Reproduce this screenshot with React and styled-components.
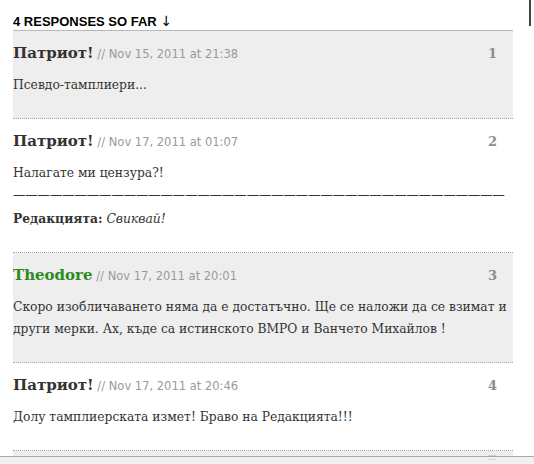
import styled, { createGlobalStyle } from "styled-components";

const comments = [
  {
    id: 1,
    author: "Патриот!",
    date: "Nov 15, 2011 at 21:38",
    alt: true,
    body: [<p key="a">Псевдо-тамплиери...</p>],
  },
  {
    id: 2,
    author: "Патриот!",
    date: "Nov 17, 2011 at 01:07",
    body: [
      <p key="a">
        Налагате ми цензура?!
        <br />
        {"—".repeat(40)}
      </p>,
      <p key="b">
        <strong>Редакцията:</strong> <em>Свиквай!</em>
      </p>,
    ],
  },
  {
    id: 3,
    author: "Theodore",
    date: "Nov 17, 2011 at 20:01",
    alt: true,
    green: true,
    body: [
      <p key="a">
        Скоро изобличаването няма да е достатъчно. Ще се наложи да се взимат и
        други мерки. Ах, къде са истинското ВМРО и Ванчето Михайлов !
      </p>,
    ],
  },
  {
    id: 4,
    author: "Патриот!",
    date: "Nov 17, 2011 at 20:46",
    body: [<p key="a">Долу тамплиерската измет! Браво на Редакцията!!!</p>],
  },
];

export default function App() {
  return (
    <>
      <GlobalStyle />
      <Page>
        <Main>
          <Heading>
            4 RESPONSES SO FAR <Arrow>↓</Arrow>
          </Heading>
          <CommentList>
            {comments.map((c) => (
              <Comment key={c.id} $alt={c.alt}>
                <CommentHead>
                  <div>
                    <Author $green={c.green}>{c.author}</Author>
                    <Meta> // {c.date}</Meta>
                  </div>
                  <Number>{c.id}</Number>
                </CommentHead>
                <Body>{c.body}</Body>
              </Comment>
            ))}
            <Comment $alt />
          </CommentList>
        </Main>
        <SideEdge />
      </Page>
      <Scrollbar>
        <Grip>:::</Grip>
      </Scrollbar>
    </>
  );
}

const GlobalStyle = createGlobalStyle`
  html, body {
    margin: 0;
    padding: 0;
    background: #fff;
    overflow: hidden;
  }
`;

const Page = styled.div`
  display: flex;
  height: 464px;
  padding-left: 13px;
`;

const Main = styled.div`
  width: 500px;
  padding-top: 12px;
`;

const Heading = styled.h3`
  margin: 0;
  font-family: "Liberation Sans", Arial, sans-serif;
  font-size: 13px;
  font-weight: bold;
  line-height: 18px;
  height: 18px;
  color: #000;
`;

const Arrow = styled.span`
  font-family: "DejaVu Sans", sans-serif;
  font-weight: normal;
  font-size: 14px;
`;

const CommentList = styled.ol`
  list-style: none;
  margin: 0;
  padding: 0;
  border-top: 1px solid #b9b9b9;
`;

const Comment = styled.li`
  background: ${(p) => (p.$alt ? "#eeeeee" : "#fff")};
  padding: 12px 16px 22px 0;
  min-height: 40px;
  border-bottom: 1px dotted #a8a8a8;
`;

const CommentHead = styled.div`
  display: flex;
  justify-content: space-between;
  align-items: center;
  line-height: 20px;
`;

const Author = styled.span`
  font-family: "DejaVu Serif", Georgia, serif;
  font-weight: bold;
  font-size: 15px;
  color: ${(p) => (p.$green ? "#2b8a1c" : "#333")};
`;

const Meta = styled.span`
  font-family: "DejaVu Sans", Verdana, sans-serif;
  font-size: 11.5px;
  color: #9a9a9a;
`;

const Number = styled.span`
  font-family: "DejaVu Serif", Georgia, serif;
  font-weight: bold;
  font-size: 13px;
  color: #8c8c8c;
`;

const Body = styled.div`
  margin-top: 10px;
  margin-right: -18px;
  font-family: "DejaVu Serif", Georgia, serif;
  font-size: 12.3px;
  line-height: 22px;
  color: #333;
  p {
    margin: 0;
  }
  p + p {
    margin-top: 2px;
  }
`;

const SideEdge = styled.div`
  margin-left: 16px;
  width: 2px;
  height: 26px;
  background: #444;
`;

const Scrollbar = styled.div`
  position: fixed;
  left: 0;
  right: 0;
  bottom: 0;
  height: 7px;
  border-top: 1px solid #a9a9a9;
  background: #f1f1f1;
`;

const Grip = styled.span`
  position: absolute;
  left: 488px;
  top: -4px;
  font-size: 8px;
  color: #999;
  font-family: "DejaVu Sans", sans-serif;
`;
